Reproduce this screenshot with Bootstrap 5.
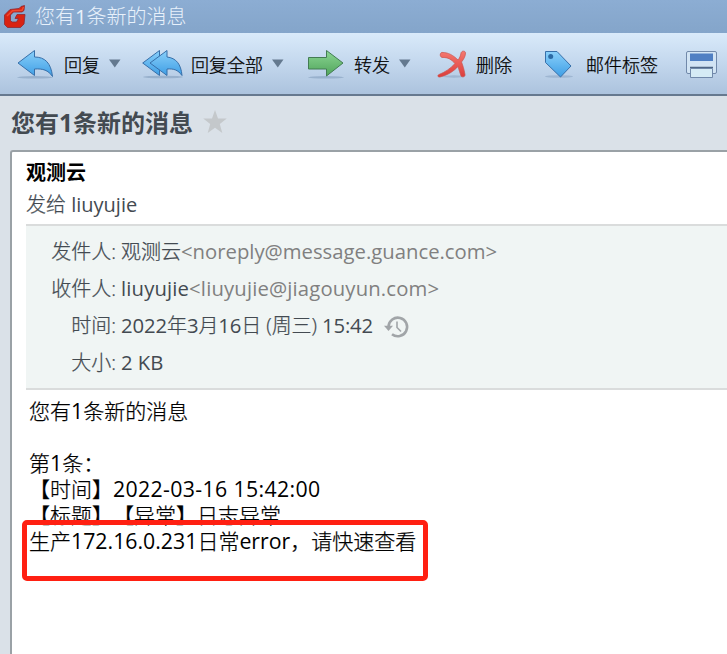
<!DOCTYPE html>
<html lang="zh-CN">
<head>
<meta charset="utf-8">
<meta name="viewport" content="width=device-width, initial-scale=1">
<title>您有1条新的消息</title>
<link rel="stylesheet" href="https://cdn.jsdelivr.net/npm/bootstrap@5.3.0/dist/css/bootstrap.min.css">
<style>
body{font-family:"Open Sans","Noto Sans CJK SC",sans-serif;font-weight:300;background:#dae1e8;height:654px;color:#000;text-spacing-trim:space-all;-webkit-text-stroke:.25px currentColor}
.cjk{font-family:"Noto Sans CJK SC",sans-serif}
.lt{font-size:1.015em;font-weight:400;-webkit-text-stroke:0}
.subject .lt{font-weight:700}
.stamp{letter-spacing:.35px}
.recipient{letter-spacing:.15px}
.clock{letter-spacing:-.1px}
.titlebar{height:33px;padding-left:4px;background:linear-gradient(#8cadd3,#84a5ca);color:#e8f1fb;font-size:20px;line-height:33px;-webkit-text-stroke:0}
.titlebar svg{margin-right:8px}
.toolbar{height:63px;background:linear-gradient(#d9eafa,#c3d7ed 50%,#acc3de);border-bottom:2px solid #66798f;font-size:18px}
.tool{height:61px;flex:none}
.tool svg{flex:none}
.tool span{padding-top:1px;margin:0 9px}
.subject{height:54px;padding-left:11px;font-size:24px;line-height:54px;font-weight:700;color:#434a51;-webkit-text-stroke:0}
.message{height:504px;margin-left:10px;border:solid #9aa1a6;border-width:2px 0 0 2px;border-top-left-radius:3px;padding:5px 0 0 14px}
.sender{font-size:20px;line-height:32px;font-weight:700;-webkit-text-stroke:0}
.sendto{font-size:20px;line-height:32px;height:35px;color:#434a51}
.sendto .lt{font-size:1em}
.details{height:166px;background:#f0f5f4;border:solid #dadcdc;border-width:2px 0;padding-top:7px;font-size:20px;color:#434a51}
.details .line{height:37px;line-height:37px}
.details .key{width:90px;margin-right:5px}
.details .addr{color:#808080}
.mailtext{padding:8px 0 0 3px;font-size:21px;line-height:26px}
.mailtext div{height:26px;white-space:nowrap}
.marker{left:22px;top:520px;width:406px;height:61px;border:5px solid #ff2012;border-radius:5px}
</style>
</head>
<body class="overflow-hidden position-relative">
<header class="titlebar d-flex align-items-center">
  <svg width="23" height="24" viewBox="0 0 23 24"><path d="M20.500.5L20 5.500 18 7H9.500L6.500 10v5.500L8 17h4.500l2-3.500H11l2-4h8L20 19l-3.500 3.500h-13L.5 19.500V10L6 4.500l9-1 2-2z" fill="#d92312" stroke="#8d2a32" stroke-width=".8"/><path d="M19.500 2L18 5.200 8.500 5.800 3 11" fill="none" stroke="#ef4b31" stroke-width="1.500"/></svg>
  <span>您有<span class="lt">1</span>条新的消息</span>
</header>
<nav class="toolbar d-flex cjk">
  <div class="tool d-flex align-items-center" style="width:142px;padding-left:17px">
    <svg width="38" height="30" viewBox="0 0 38 30"><defs><linearGradient id="bl" x2="0" y2="1"><stop stop-color="#8ad0fa"/><stop offset="1" stop-color="#3e9ee5"/></linearGradient><linearGradient id="gr" x2="0" y2="1"><stop stop-color="#8bd693"/><stop offset="1" stop-color="#50a45b"/></linearGradient><linearGradient id="rd" x2="0" y2="1"><stop stop-color="#f57970"/><stop offset="1" stop-color="#dc3d3c"/></linearGradient></defs><ellipse cx="18" cy="28.3" rx="18" ry="1.3" fill="#7893b3" opacity=".5"/><path d="M1 14L17.500 1.500V8C28 8 34 14 35.500 27.500C31 21 26 19.500 17.500 20V26.500z" fill="url(#bl)" stroke="#376fa9"/></svg>
    <span>回复</span>
    <svg width="12" height="9" viewBox="0 0 12 9"><path d="M0 .5h11.500L5.800 8.500z" fill="#64798f"/></svg>
  </div>
  <div class="tool d-flex align-items-center" style="width:165px">
    <svg width="40" height="30" viewBox="0 0 40 30" overflow="visible"><ellipse cx="21" cy="28" rx="20" ry="1.300" fill="#7893b3" opacity=".5"/><path d="M.7 14L17.500 1.500V26.500z" fill="url(#bl)" stroke="#376fa9"/><path d="M8 14L25 1.500V8C34 9 39 15 40 26.500C36 21 32 19.500 25 20V26.500z" fill="url(#bl)" stroke="#376fa9"/></svg>
    <span>回复全部</span>
    <svg width="12" height="9" viewBox="0 0 12 9"><path d="M0 .5h11.500L5.800 8.500z" fill="#64798f"/></svg>
  </div>
  <div class="tool d-flex align-items-center" style="width:130px">
    <svg width="38" height="30" viewBox="0 0 38 30"><ellipse cx="19" cy="28.300" rx="18" ry="1.200" fill="#7893b3" opacity=".5"/><path d="M1.500 8.500H19.500V1.500L36 14 19.500 27V20H1.500z" fill="url(#gr)" stroke="#437c53"/></svg>
    <span>转发</span>
    <svg width="12" height="9" viewBox="0 0 12 9"><path d="M0 .5h11.500L5.800 8.500z" fill="#64798f"/></svg>
  </div>
  <div class="tool d-flex align-items-center" style="width:107px">
    <svg width="30" height="30" viewBox="0 0 30 30"><ellipse cx="17" cy="27.500" rx="11" ry="1.200" fill="#7893b3" opacity=".4"/><path d="M6 3.500C3 2.500 2 7.500 5 8.500C11 8 15 11 18 14.500C13 20 8 23 2 25.500C0 26.500 1 28.500 3 28C11 26 17 22 21 17.500C22 21 23 24 24 27C25 28.500 28.500 28 28 25.500C27 20 26 17 24.500 13C27 10 28.500 7 28.500 4C28.500 1.500 24.500 1.500 24 4C23.500 7 22.500 9 21 11C16 6 11 3.500 6 3.500z" fill="url(#rd)" stroke="#c7554f" stroke-width=".7"/></svg>
    <span>删除</span>
  </div>
  <div class="tool d-flex align-items-center" style="width:141px">
    <svg width="33" height="30" viewBox="0 0 33 30"><ellipse cx="15" cy="27.500" rx="14" ry="1.300" fill="#7893b3" opacity=".4"/><path d="M1.500 2.500L13 2.500 27 17 16.500 28 1.500 13.500z" fill="url(#bl)" stroke="#376fa9"/><circle cx="6.700" cy="7.500" r="2.500" fill="#2c6ba5"/></svg>
    <span>邮件标签</span>
  </div>
  <div class="tool d-flex align-items-center">
    <svg width="33" height="30" viewBox="0 0 33 30"><rect x="1.500" y="2.500" width="30" height="22" rx="1.500" fill="#d2e4f4" stroke="#7189aa"/><path d="M5 4.500h23v7.500H5z" fill="#4f7fc3"/><path d="M5 18.500h23" stroke="#4f6786" stroke-width="1.500"/><path d="M5.500 19.500h22v9h-22z" fill="#d5ebf5" stroke="#7189aa"/></svg>
  </div>
</nav>
<h1 class="subject d-flex align-items-center m-0"><span>您有<span class="lt">1</span>条新的消息</span><svg class="ms-2" width="26" height="26" viewBox="0 0 26 26"><path d="M14 0l3 8.500h8.800l-7 5.400 2.500 9-7.300-5.200-7.300 5.200 2.500-9-7-5.400H11z" fill="#c4c8cb"/></svg></h1>
<main class="message bg-white">
  <div class="sender">观测云</div>
  <div class="sendto">发给 <span class="lt">liuyujie</span></div>
  <section class="details">
    <div class="line d-flex"><span class="key text-end">发件人:</span><span>观测云<span class="lt addr">&lt;noreply@message.guance.com&gt;</span></span></div>
    <div class="line d-flex"><span class="key text-end">收件人:</span><span class="lt recipient">liuyujie<span class="addr">&lt;liuyujie@jiagouyun.com&gt;</span></span></div>
    <div class="line d-flex align-items-center"><span class="key text-end">时间:</span><span class="clock"><span class="lt">2022</span>年<span class="lt">3</span>月<span class="lt">16</span>日 (周三) <span class="lt">15:42</span></span>
      <svg style="margin-left:11px;margin-top:2px" width="26" height="24" viewBox="0 0 26 24" fill="none" stroke="#a1a5a8" stroke-width="2.600"><path d="M4.500 11.500A9.300 9.300 0 1 1 8 19.200"/><path d="M0 10.800h9L4.500 16z" fill="#a1a5a8" stroke="none"/><path d="M13 6.500v6l4 4" stroke-width="1.600"/></svg>
    </div>
    <div class="line d-flex"><span class="key text-end">大小:</span><span class="lt">2 KB</span></div>
  </section>
  <article class="mailtext">
    <div>您有<span class="lt">1</span>条新的消息</div>
    <div></div>
    <div>第<span class="lt">1</span>条：</div>
    <div>【时间】<span class="lt stamp">2022-03-16 15:42:00</span></div>
    <div>【标题】【异常】日志异常</div>
    <div>生产<span class="lt">172.16.0.231</span>日常<span class="lt">error</span>，请快速查看</div>
  </article>
</main>
<div class="marker position-absolute"></div>
<script src="https://cdn.jsdelivr.net/npm/bootstrap@5.3.0/dist/js/bootstrap.bundle.min.js"></script>
</body>
</html>
